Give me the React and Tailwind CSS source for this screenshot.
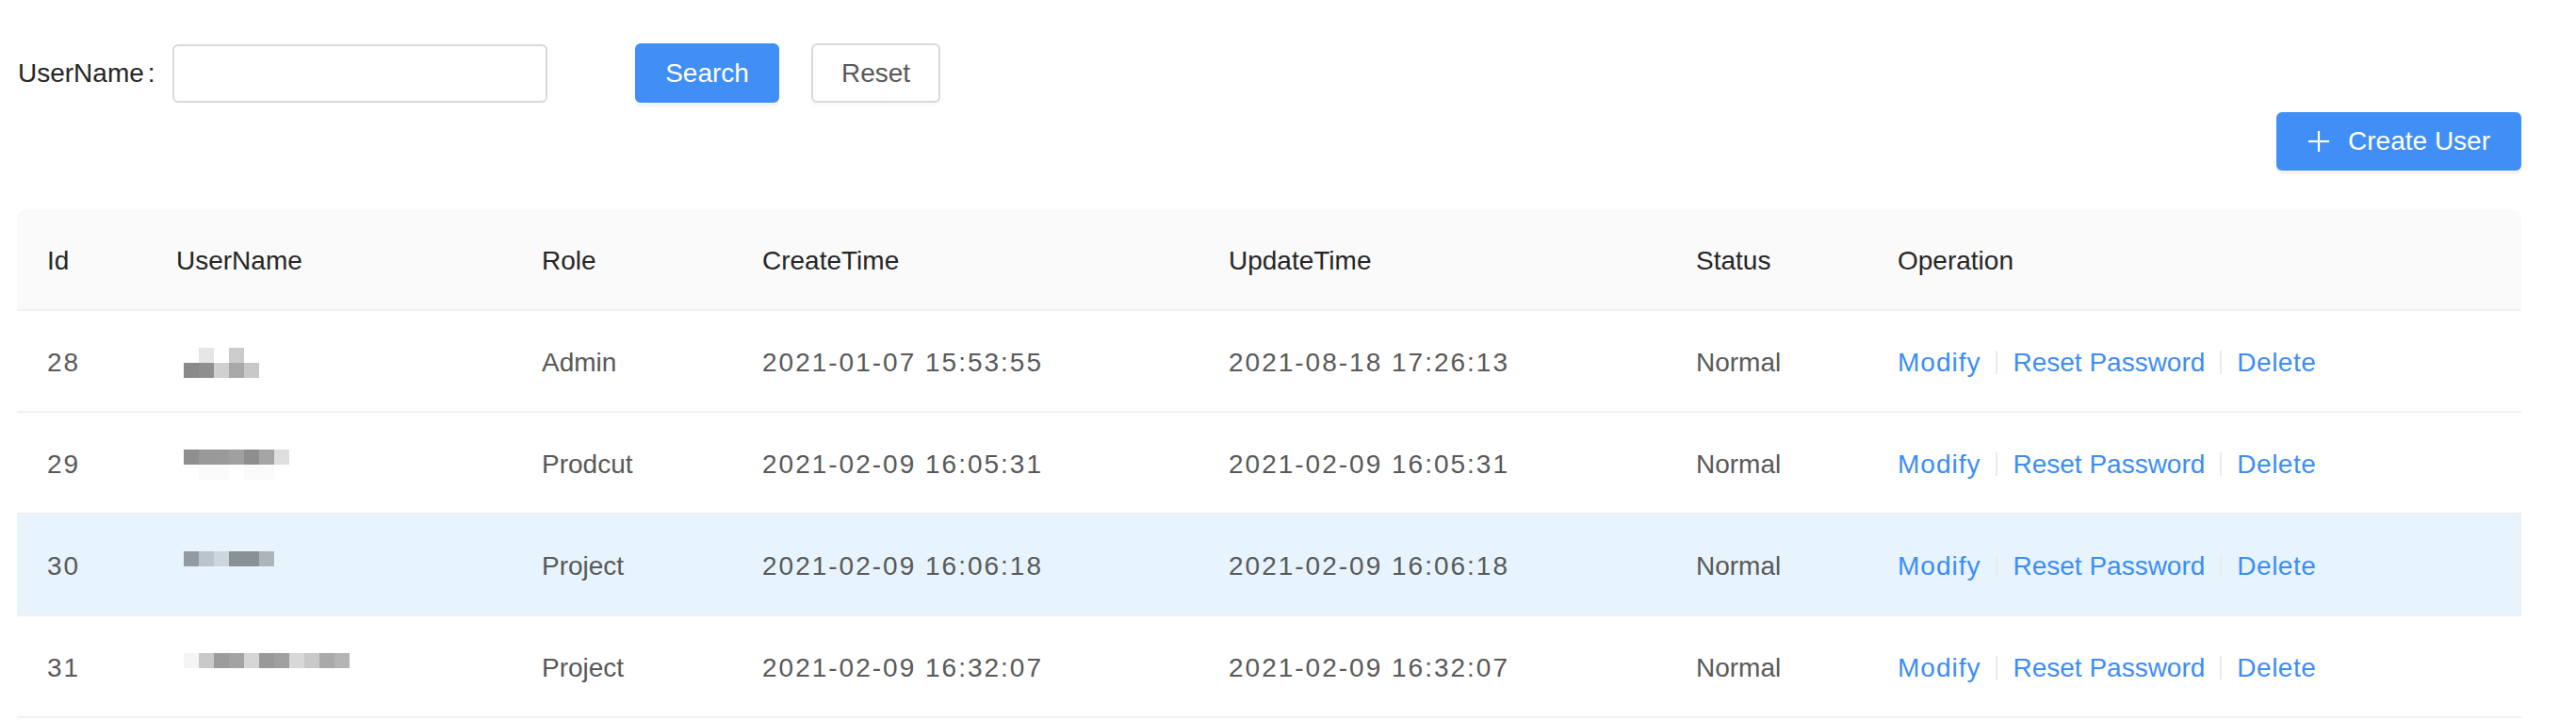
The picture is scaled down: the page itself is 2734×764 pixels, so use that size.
import React from 'react';

const COLS = 'grid grid-cols-[137px_388px_234px_495px_496px_214px_1fr]';

const USERS = [
    {
        id: 28,
        role: 'Admin',
        createTime: '2021-01-07 15:53:55',
        updateTime: '2021-08-18 17:26:13',
        // pixelated (masked) user name, two rows of blocks
        mask: [
            ['bg-transparent', 'bg-[#e6e6e6]', 'bg-transparent', 'bg-[#cccccc]', 'bg-transparent'],
            ['bg-[#8a8a8a]', 'bg-[#8f8f8f]', 'bg-[#d0d0d0]', 'bg-[#a8a8a8]', 'bg-[#c8c8c8]'],
        ],
    },
    {
        id: 29,
        role: 'Prodcut',
        createTime: '2021-02-09 16:05:31',
        updateTime: '2021-02-09 16:05:31',
        mask: [
            ['bg-[#8f8f8f]', 'bg-[#999999]', 'bg-[#9a9a9a]', 'bg-[#a0a0a0]', 'bg-[#8e8e8e]', 'bg-[#a5a5a5]', 'bg-[#dedede]'],
            ['bg-transparent', 'bg-[#fafafa]', 'bg-[#fafafa]', 'bg-transparent', 'bg-[#fafafa]', 'bg-[#fafafa]', 'bg-transparent'],
        ],
    },
    {
        id: 30,
        role: 'Project',
        createTime: '2021-02-09 16:06:18',
        updateTime: '2021-02-09 16:06:18',
        hover: true,
        mask: [
            ['bg-[#939aa0]', 'bg-[#bcc4cb]', 'bg-[#cdd6dc]', 'bg-[#8a9196]', 'bg-[#8a9196]', 'bg-[#adb5bb]'],
            [],
        ],
    },
    {
        id: 31,
        role: 'Project',
        createTime: '2021-02-09 16:32:07',
        updateTime: '2021-02-09 16:32:07',
        mask: [
            ['bg-[#f5f5f5]', 'bg-[#c9c9c9]', 'bg-[#9c9c9c]', 'bg-[#a3a3a3]', 'bg-[#d5d5d5]', 'bg-[#999999]', 'bg-[#a0a0a0]', 'bg-[#d8d8d8]', 'bg-[#c9c9c9]', 'bg-[#a9a9a9]', 'bg-[#b4b4b4]'],
            [],
        ],
    },
];

const MaskedName = ({ rows }) => (
    <div className="flex flex-col">
        {rows.map((row, r) => (
            <div key={r} className="flex h-[16px]">
                {row.map((cls, c) => (
                    <span key={c} className={`w-[16px] h-[16px] ${cls}`} />
                ))}
            </div>
        ))}
    </div>
);

const Divider = () => <span className="mx-[16px] w-[2px] h-[25px] bg-[#ebebeb]" />;

const App = () => {
    return (
        <div className="w-full bg-white text-[28px] leading-none text-[#262626] font-['Liberation_Sans',Arial,sans-serif]">
            {/* Search form */}
            <div className="flex items-center h-[63px] mt-[46px] pl-[19px]">
                <div className="flex items-center w-[164px]">
                    <span>UserName</span>
                    <span className="ml-[4px]">:</span>
                </div>
                <input
                    type="text"
                    className="w-[398px] h-[62px] px-[22px] border-2 border-[#d9d9d9] rounded-[6px] outline-none bg-white"
                />
                <button className="ml-[93px] w-[153px] h-[63px] rounded-[6px] bg-[#3f8ff7] text-white shadow-[0_4px_0_rgba(0,0,0,0.045)]">
                    Search
                </button>
                <button className="ml-[34px] w-[137px] h-[63px] rounded-[6px] border-2 border-[#d9d9d9] bg-white text-[#595959] shadow-[0_4px_0_rgba(0,0,0,0.015)]">
                    Reset
                </button>
            </div>

            {/* Toolbar */}
            <div className="flex justify-end mt-[10px] pr-[58px]">
                <button className="flex items-center gap-[20px] h-[62px] pl-[34px] pr-[33px] rounded-[6px] bg-[#3f8ff7] text-white shadow-[0_4px_0_rgba(0,0,0,0.045)]">
                    <svg width="22" height="22" viewBox="0 0 22 22" fill="none" stroke="currentColor" strokeWidth="2.2">
                        <line x1="11" y1="0" x2="11" y2="22" />
                        <line x1="0" y1="11" x2="22" y2="11" />
                    </svg>
                    Create User
                </button>
            </div>

            {/* Table */}
            <div className="mt-[41px] ml-[18px] mr-[58px]">
                <div className={`${COLS} items-center h-[108px] pt-[3px] bg-[#fafafa] rounded-t-[10px] border-b-2 border-[#f0f0f0] text-[#262626]`}>
                    <div className="pl-[32px]">Id</div>
                    <div className="pl-[32px]">UserName</div>
                    <div className="pl-[32px]">Role</div>
                    <div className="pl-[32px]">CreateTime</div>
                    <div className="pl-[32px]">UpdateTime</div>
                    <div className="pl-[32px]">Status</div>
                    <div className="pl-[32px]">Operation</div>
                </div>

                {USERS.map((u) => (
                    <div
                        key={u.id}
                        className={`${COLS} items-center h-[108px] pt-[3px] border-b-2 border-[#f0f0f0] text-[#595959] ${u.hover ? 'bg-[#e7f4fd]' : 'bg-white'}`}
                    >
                        <div className="pl-[32px] tracking-[2px]">{u.id}</div>
                        <div className="pl-[40px]">
                            <MaskedName rows={u.mask} />
                        </div>
                        <div className="pl-[32px]">{u.role}</div>
                        <div className="pl-[32px] tracking-[2px]">{u.createTime}</div>
                        <div className="pl-[32px] tracking-[2px]">{u.updateTime}</div>
                        <div className="pl-[32px]">Normal</div>
                        <div className="pl-[32px] flex items-center text-[#3d8df6]">
                            <a className="cursor-pointer tracking-[1px]">Modify</a>
                            <Divider />
                            <a className="cursor-pointer">Reset Password</a>
                            <Divider />
                            <a className="cursor-pointer tracking-[0.5px]">Delete</a>
                        </div>
                    </div>
                ))}
            </div>
        </div>
    );
};

export default App;
